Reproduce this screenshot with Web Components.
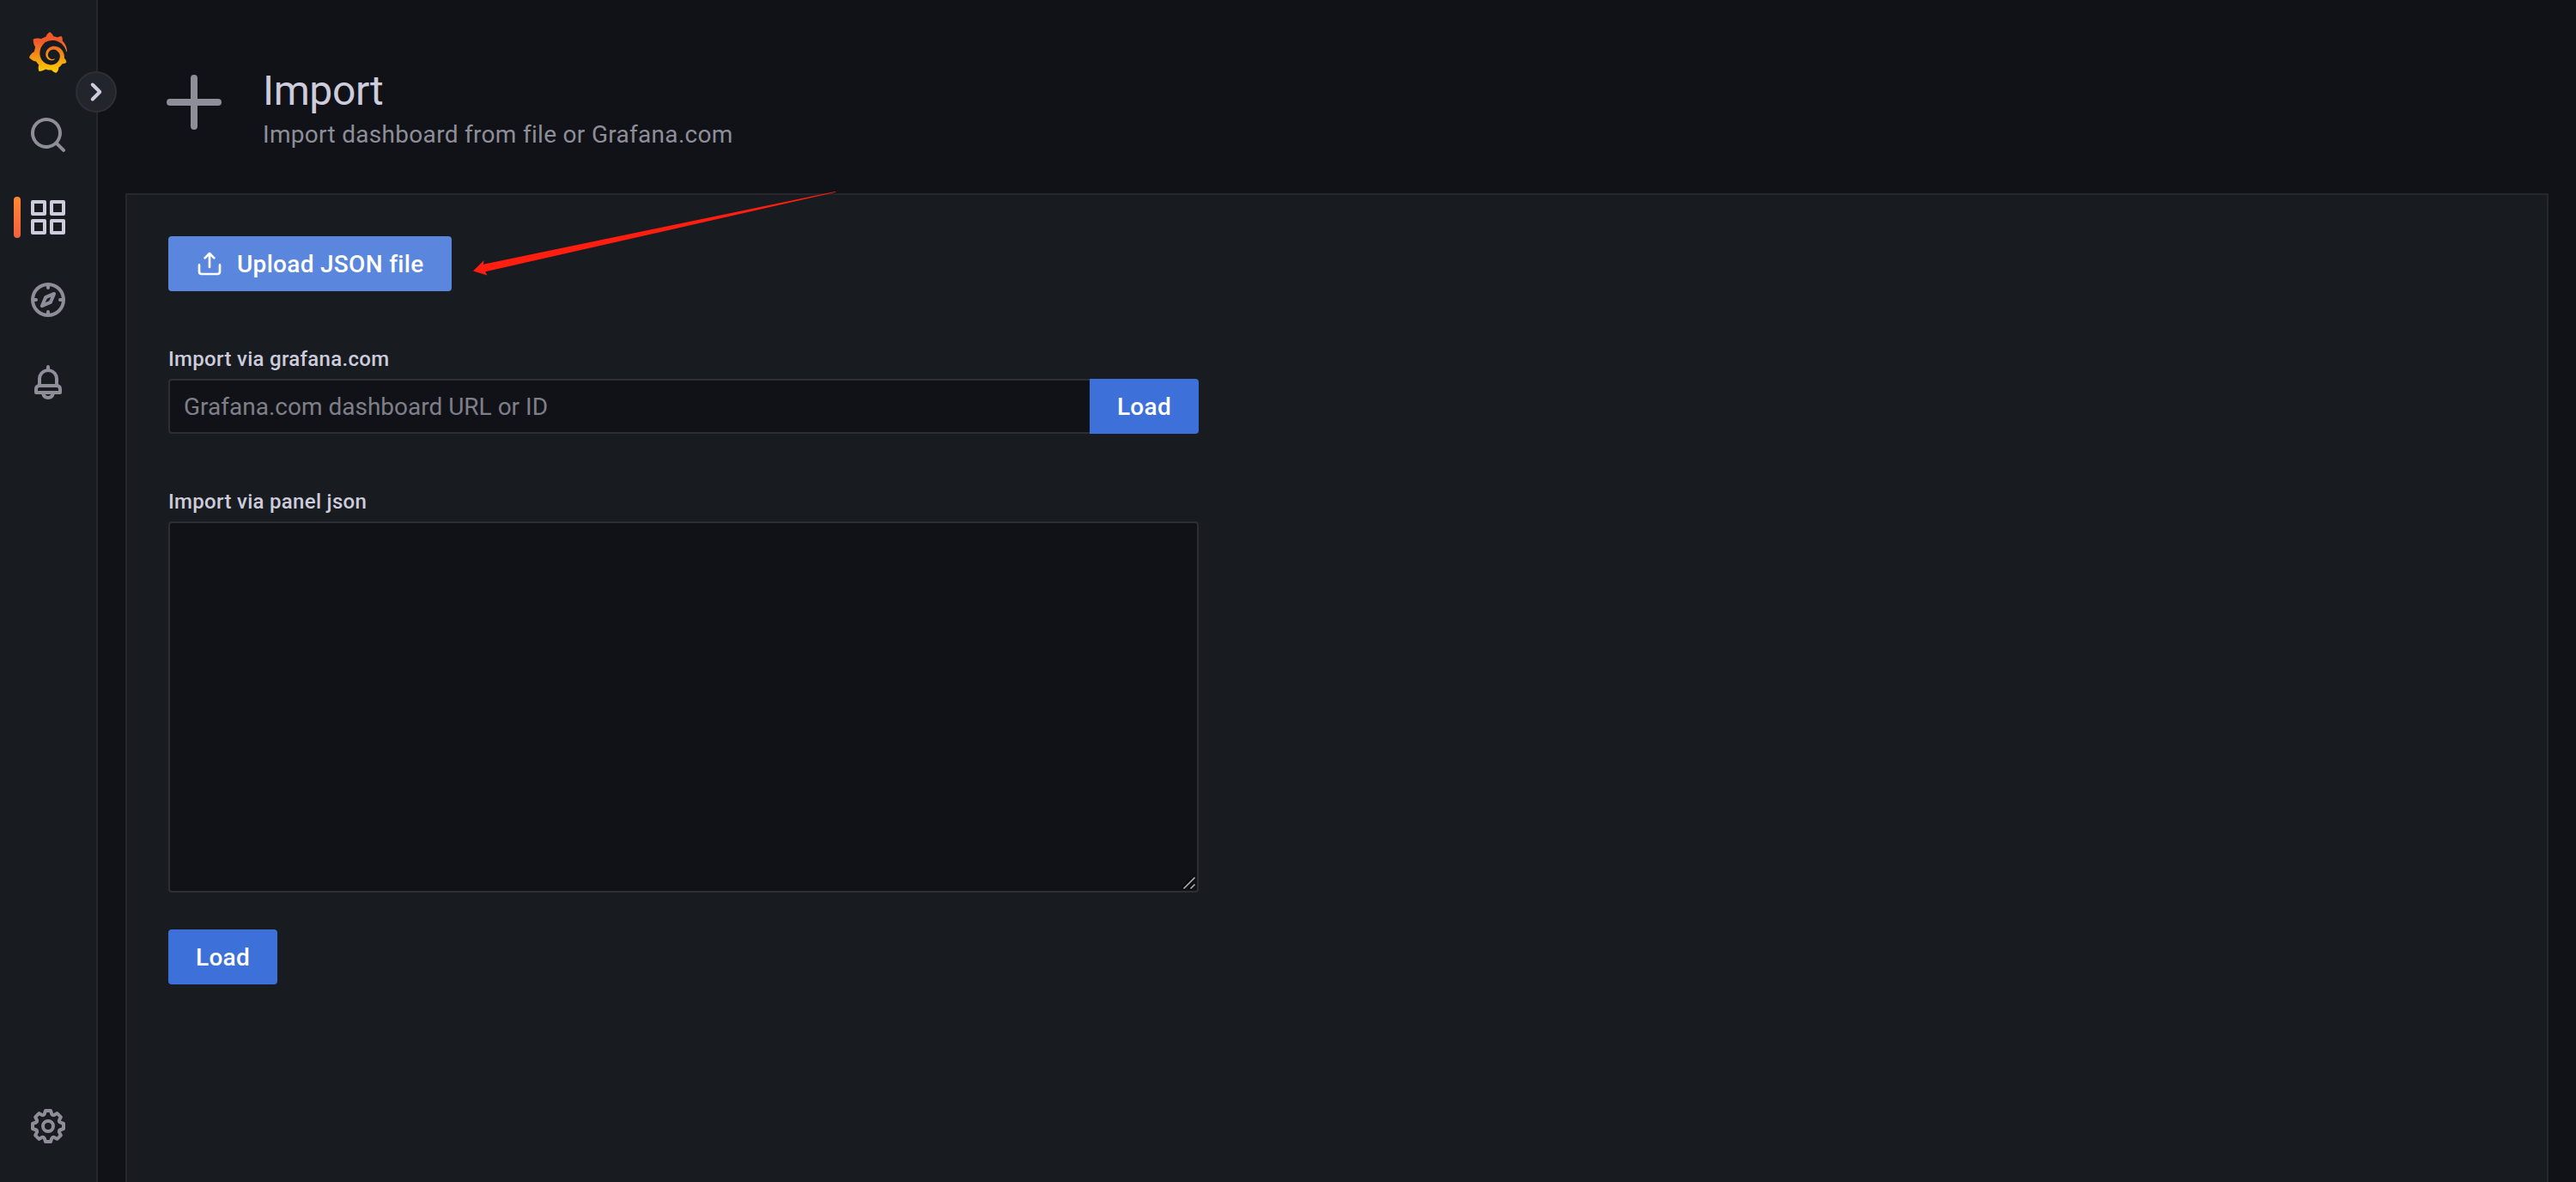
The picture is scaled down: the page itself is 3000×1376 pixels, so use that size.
<!DOCTYPE html>
<html lang="en">
<head>
<meta charset="utf-8">
<title>Import - Grafana</title>
<style>
:root {
    --canvas: #111217;
    --primary-bg: #181b1f;
    --secondary-bg: #22252b;
    --border-weak: #25272c;
    --border-medium: #2d2e34;
    --text: #ccccdc;
    --text-muted: #8e8e99;
    --primary: #3d71d9;
    --primary-hover: #5a86dd;
}
body {
    margin: 0;
    height: 1376px;
    overflow: hidden;
    background: var(--canvas);
    color: var(--text);
    font: 400 28px/44px Roboto, "Liberation Sans", sans-serif;
    letter-spacing: 0.3px;
}
</style>
</head>
<body>
<gf-app>
    <gf-sidebar slot="nav">
        <gf-nav-item><gf-logo></gf-logo></gf-nav-item>
        <gf-nav-item><gf-icon name="search"></gf-icon></gf-nav-item>
        <gf-nav-item active><gf-icon name="apps"></gf-icon></gf-nav-item>
        <gf-nav-item><gf-icon name="compass"></gf-icon></gf-nav-item>
        <gf-nav-item><gf-icon name="bell"></gf-icon></gf-nav-item>
        <gf-nav-item slot="bottom"><gf-icon name="cog"></gf-icon></gf-nav-item>
    </gf-sidebar>
    <gf-page-header>
        <gf-icon slot="icon" name="plus" size="64"></gf-icon>
        <span slot="title">Import</span>
        <span slot="subtitle">Import dashboard from file or Grafana.com</span>
    </gf-page-header>
    <gf-panel>
        <gf-button hover><gf-icon slot="icon" name="upload" size="32"></gf-icon>Upload JSON file</gf-button>
        <gf-field class="url">
            <span slot="label">Import via grafana.com</span>
            <gf-input>Grafana.com dashboard URL or ID</gf-input>
            <gf-button attached>Load</gf-button>
        </gf-field>
        <gf-field class="json">
            <span slot="label">Import via panel json</span>
            <gf-textarea></gf-textarea>
        </gf-field>
        <gf-button>Load</gf-button>
    </gf-panel>
    <gf-arrow slot="overlay"></gf-arrow>
</gf-app>

<script>
const define = (name, html, setup) => {
    const template = document.createElement('template');
    template.innerHTML = html;

    window.customElements.define(name, class extends HTMLElement {
        constructor() {
            super();
            const shadowRoot = this.attachShadow({ mode: "open" });
            shadowRoot.appendChild(template.content.cloneNode(true));
            if (setup) setup(this, shadowRoot);
        }
    });
};

const icons = {
    search: 'M21.71,20.29,18,16.61A9,9,0,1,0,16.61,18l3.68,3.68a1,1,0,0,0,1.42,0A1,1,0,0,0,21.71,20.29ZM11,18a7,7,0,1,1,7-7A7,7,0,0,1,11,18Z',
    apps: 'M10,13H3a1,1,0,0,0-1,1v7a1,1,0,0,0,1,1h7a1,1,0,0,0,1-1V14A1,1,0,0,0,10,13ZM9,20H4V15H9ZM21,2H14a1,1,0,0,0-1,1v7a1,1,0,0,0,1,1h7a1,1,0,0,0,1-1V3A1,1,0,0,0,21,2ZM20,9H15V4h5Zm1,4H14a1,1,0,0,0-1,1v7a1,1,0,0,0,1,1h7a1,1,0,0,0,1-1V14A1,1,0,0,0,21,13Zm-1,7H15V15h5ZM10,2H3A1,1,0,0,0,2,3v7a1,1,0,0,0,1,1h7a1,1,0,0,0,1-1V3A1,1,0,0,0,10,2ZM9,9H4V4H9Z',
    compass: 'M12,2A10,10,0,1,0,22,12,10,10,0,0,0,12,2Zm1,17.93V19a1,1,0,0,0-2,0v.93A8,8,0,0,1,4.07,13H5a1,1,0,0,0,0-2H4.07A8,8,0,0,1,11,4.07V5a1,1,0,0,0,2,0V4.07A8,8,0,0,1,19.93,11H19a1,1,0,0,0,0,2h.93A8,8,0,0,1,13,19.93ZM15.14,7.55l-5,2.12a1,1,0,0,0-.52.52l-2.12,5a1,1,0,0,0,.21,1.1,1,1,0,0,0,.7.29.93.93,0,0,0,.4-.08l5-2.12a1,1,0,0,0,.52-.52l2.12-5a1,1,0,0,0-1.31-1.31Zm-2.49,5.1-2.28,1,1-2.28,2.28-1Z',
    bell: 'M18,13.18V10a6,6,0,0,0-5-5.91V3a1,1,0,0,0-2,0V4.09A6,6,0,0,0,6,10v3.18A3,3,0,0,0,4,16v2a1,1,0,0,0,1,1H8.14a4,4,0,0,0,7.72,0H19a1,1,0,0,0,1-1V16A3,3,0,0,0,18,13.18ZM8,10a4,4,0,0,1,8,0v3H8Zm4,10a2,2,0,0,1-1.72-1h3.44A2,2,0,0,1,12,20Zm6-3H6V16a1,1,0,0,1,1-1H17a1,1,0,0,1,1,1Z',
    cog: 'M21.32,9.55l-1.89-.63.89-1.78A1,1,0,0,0,20.13,6L18,3.87a1,1,0,0,0-1.15-.19l-1.78.89-.63-1.89A1,1,0,0,0,13.5,2h-3a1,1,0,0,0-.95.68L8.92,4.57,7.14,3.68A1,1,0,0,0,6,3.87L3.87,6a1,1,0,0,0-.19,1.15l.89,1.78-1.89.63A1,1,0,0,0,2,10.5v3a1,1,0,0,0,.68.95l1.89.63-.89,1.78A1,1,0,0,0,3.87,18L6,20.13a1,1,0,0,0,1.15.19l1.78-.89.63,1.89a1,1,0,0,0,.95.68h3a1,1,0,0,0,.95-.68l.63-1.89,1.78.89A1,1,0,0,0,18,20.13L20.13,18a1,1,0,0,0,.19-1.15l-.89-1.78,1.89-.63A1,1,0,0,0,22,13.5v-3A1,1,0,0,0,21.32,9.55ZM20,12.78l-1.2.4A2,2,0,0,0,17.64,16l.57,1.14-1.1,1.1L16,17.64a2,2,0,0,0-2.79,1.16l-.4,1.2H11.22l-.4-1.2A2,2,0,0,0,8,17.64l-1.14.57-1.1-1.1L6.36,16A2,2,0,0,0,5.2,13.18L4,12.78V11.22l1.2-.4A2,2,0,0,0,6.36,8L5.79,6.89l1.1-1.1L8,6.36A2,2,0,0,0,10.82,5.2l.4-1.2h1.56l.4,1.2A2,2,0,0,0,16,6.36l1.14-.57,1.1,1.1L17.64,8a2,2,0,0,0,1.16,2.79l1.2.4ZM12,8a4,4,0,1,0,4,4A4,4,0,0,0,12,8Zm0,6a2,2,0,1,1,2-2A2,2,0,0,1,12,14Z',
    plus: 'M12,0a1.5,1.5,0,0,1,1.5,1.5v9h9a1.5,1.5,0,0,1,0,3h-9v9a1.5,1.5,0,0,1-3,0v-9h-9a1.5,1.5,0,0,1,0-3h9v-9A1.5,1.5,0,0,1,12,0Z',
    upload: 'M8.71,7.71,11,5.41V15a1,1,0,0,0,2,0V5.41l2.29,2.3a1,1,0,0,0,1.42,0,1,1,0,0,0,0-1.42l-4-4a1,1,0,0,0-.33-.21,1,1,0,0,0-.76,0,1,1,0,0,0-.33.21l-4,4A1,1,0,1,0,8.71,7.71ZM21,12a1,1,0,0,0-1,1v6a1,1,0,0,1-1,1H5a1,1,0,0,1-1-1V13a1,1,0,0,0-2,0v6a3,3,0,0,0,3,3H19a3,3,0,0,0,3-3V13A1,1,0,0,0,21,12Z',
    'angle-right': 'M14.83,11.29,10.59,7.05a1,1,0,0,0-1.42,0,1,1,0,0,0,0,1.41L12.71,12,9.17,15.54a1,1,0,0,0,0,1.41,1,1,0,0,0,.71.29,1,1,0,0,0,.71-.29l4.24-4.24A1,1,0,0,0,14.83,11.29Z'
};

define('gf-icon', `
<style>
:host { display: block; flex: none; }
svg { display: block; fill: currentColor; }
</style>
<svg viewBox="0 0 24 24" width="48" height="48"><path/></svg>`, (host, root) => {
    const svg = root.querySelector('svg');
    const size = host.getAttribute('size') || 48;
    svg.setAttribute('width', size);
    svg.setAttribute('height', size);
    root.querySelector('path').setAttribute('d', icons[host.getAttribute('name')]);
});

define('gf-logo', `
<style>
:host { display: block; }
svg { display: block; }
</style>
<svg viewBox="0 0 351 365" width="48" height="48">
    <defs>
        <linearGradient id="flame" gradientUnits="userSpaceOnUse" x1="175" y1="358" x2="175" y2="90">
            <stop offset="0" stop-color="#fcd000"/>
            <stop offset="1" stop-color="#f05a28"/>
        </linearGradient>
    </defs>
    <path fill="url(#flame)" d="M342,161.2c-0.6-6.1-1.6-13.1-3.6-20.9c-2-7.7-5-16.2-9.4-25c-4.4-8.8-10.1-17.9-17.5-26.8c-2.9-3.5-6.1-6.9-9.5-10.2c5.1-20.3-6.2-37.9-6.2-37.9c-19.5-1.2-31.9,6.1-36.5,9.4c-0.8-0.3-1.5-0.7-2.3-1c-3.3-1.3-6.7-2.6-10.3-3.7c-3.5-1.1-7.1-2.1-10.8-3c-3.7-0.9-7.4-1.6-11.2-2.2c-0.7-0.1-1.3-0.2-2-0.3c-8.5-27.2-32.9-38.6-32.9-38.6c-27.3,17.3-32.4,41.5-32.4,41.5s-0.1,0.5-0.3,1.4c-1.5,0.4-3,0.9-4.5,1.3c-2.1,0.6-4.2,1.4-6.2,2.2c-2.1,0.8-4.1,1.6-6.2,2.5c-4.1,1.8-8.2,3.8-12.2,6c-3.9,2.2-7.7,4.6-11.4,7.1c-0.5-0.2-1-0.4-1-0.4c-37.8-14.4-71.3,2.9-71.3,2.9c-3.1,40.2,15.1,65.5,18.7,70.1c-0.9,2.5-1.7,5-2.5,7.5c-2.8,9.1-4.9,18.4-6.2,28.1c-0.2,1.4-0.4,2.8-0.5,4.2C18.8,192.7,8.5,228,8.5,228c29.1,33.5,63.1,35.6,63.1,35.6c0,0,0.1-0.1,0.1-0.1c4.3,7.7,9.3,15,14.9,21.9c2.4,2.9,4.8,5.6,7.4,8.3c-10.6,30.4,1.5,55.6,1.5,55.6c32.4,1.2,53.7-14.2,58.2-17.7c3.2,1.1,6.5,2.1,9.8,2.9c10,2.6,20.2,4.1,30.4,4.5c2.5,0.1,5.1,0.2,7.6,0.1l1.2,0l0.8,0l1.6,0l1.6-0.1l0,0.1c15.3,21.8,42.1,24.9,42.1,24.9c19.1-20.1,20.2-40.1,20.2-44.4l0,0c0,0,0-0.1,0-0.3c0-0.4,0-0.6,0-0.6l0,0c0-0.3,0-0.6,0-0.9c4-2.8,7.8-5.8,11.4-9.1c7.6-6.9,14.3-14.8,19.9-23.3c0.5-0.8,1-1.6,1.5-2.4c21.6,1.2,36.9-13.4,36.9-13.4c-3.6-22.5-16.4-33.5-19.1-35.6l0,0c0,0-0.1-0.1-0.3-0.2c-0.2-0.1-0.2-0.2-0.2-0.2c0,0,0,0,0,0c-0.1-0.1-0.3-0.2-0.5-0.3c0.1-1.4,0.2-2.7,0.3-4.1c0.2-2.4,0.2-4.9,0.2-7.3l0-1.8l0-0.9l0-0.5c0-0.6,0-0.4,0-0.6l-0.1-1.5l-0.1-2c0-0.7-0.1-1.3-0.2-1.9c-0.1-0.6-0.1-1.3-0.2-1.9l-0.2-1.9l-0.3-1.9c-0.4-2.5-0.8-4.9-1.4-7.4c-2.3-9.7-6.1-18.9-11-27.2c-5-8.3-11.2-15.6-18.3-21.8c-7-6.2-14.9-11.2-23.1-14.9c-8.3-3.7-16.9-6.1-25.5-7.2c-4.3-0.6-8.6-0.8-12.9-0.7l-1.6,0l-0.4,0c-0.1,0-0.6,0-0.5,0l-0.7,0l-1.6,0.1c-0.6,0-1.2,0.1-1.7,0.1c-2.2,0.2-4.4,0.5-6.5,0.9c-8.6,1.6-16.7,4.7-23.8,9c-7.1,4.3-13.3,9.6-18.3,15.6c-5,6-8.9,12.7-11.6,19.6c-2.7,6.9-4.2,14.1-4.6,21c-0.1,1.7-0.1,3.5-0.1,5.2c0,0.4,0,0.9,0,1.3l0.1,1.4c0.1,0.8,0.1,1.7,0.2,2.5c0.3,3.5,1,6.9,1.9,10.1c1.9,6.5,4.9,12.4,8.6,17.4c3.7,5,8.2,9.1,12.9,12.4c4.7,3.2,9.8,5.5,14.8,7c5,1.5,10,2.1,14.7,2.1c0.6,0,1.2,0,1.7,0c0.3,0,0.6,0,0.9,0c0.3,0,0.6,0,0.9-0.1c0.5,0,1-0.1,1.5-0.1c0.1,0,0.3,0,0.4-0.1l0.5-0.1c0.3,0,0.6-0.1,0.9-0.1c0.6-0.1,1.1-0.2,1.7-0.3c0.6-0.1,1.1-0.2,1.6-0.4c1.1-0.2,2.1-0.6,3.1-0.9c2-0.7,4-1.5,5.7-2.4c1.8-0.9,3.4-2,5-3c0.4-0.3,0.9-0.6,1.3-1c1.6-1.3,1.9-3.7,0.6-5.3c-1.1-1.4-3.1-1.8-4.7-0.9c-0.4,0.2-0.8,0.4-1.2,0.6c-1.4,0.7-2.8,1.3-4.3,1.8c-1.5,0.5-3.1,0.9-4.7,1.2c-0.8,0.1-1.6,0.2-2.5,0.3c-0.4,0-0.8,0.1-1.3,0.1c-0.4,0-0.9,0-1.2,0c-0.4,0-0.8,0-1.2,0c-0.5,0-1,0-1.5-0.1c0,0-0.3,0-0.1,0l-0.2,0l-0.3,0c-0.2,0-0.5,0-0.7-0.1c-0.5-0.1-0.9-0.1-1.4-0.2c-3.7-0.5-7.4-1.6-10.9-3.2c-3.6-1.6-7-3.8-10.1-6.6c-3.1-2.8-5.8-6.1-7.9-9.9c-2.1-3.8-3.6-8-4.3-12.4c-0.3-2.2-0.5-4.5-0.4-6.7c0-0.6,0.1-1.2,0.1-1.8c0,0.2,0-0.1,0-0.1l0-0.2l0-0.5c0-0.3,0.1-0.6,0.1-0.9c0.1-1.2,0.3-2.4,0.5-3.6c1.7-9.6,6.5-19,13.9-26.1c1.9-1.8,3.9-3.4,6-4.9c2.1-1.5,4.4-2.8,6.8-3.9c2.4-1.1,4.8-2,7.4-2.7c2.5-0.7,5.1-1.1,7.8-1.4c1.3-0.1,2.6-0.2,4-0.2c0.4,0,0.6,0,0.9,0l1.1,0l0.7,0c0.3,0,0,0,0.1,0l0.3,0l1.1,0.1c2.9,0.2,5.7,0.6,8.5,1.3c5.6,1.2,11.1,3.3,16.2,6.1c10.2,5.7,18.9,14.5,24.2,25.1c2.7,5.3,4.6,11,5.5,16.9c0.2,1.5,0.4,3,0.5,4.5l0.1,1.1l0.1,1.1c0,0.4,0,0.8,0,1.1c0,0.4,0,0.8,0,1.1l0,1l0,1.1c0,0.7-0.1,1.9-0.1,2.6c-0.1,1.6-0.3,3.3-0.5,4.9c-0.2,1.6-0.5,3.2-0.8,4.8c-0.3,1.6-0.7,3.2-1.1,4.7c-0.8,3.1-1.8,6.2-3,9.3c-2.4,6-5.6,11.8-9.4,17.1c-7.7,10.6-18.2,19.2-30.2,24.7c-6,2.7-12.3,4.7-18.8,5.7c-3.2,0.6-6.5,0.9-9.8,1l-0.6,0l-0.5,0l-1.1,0l-1.6,0l-0.8,0c0.4,0-0.1,0-0.1,0l-0.3,0c-1.8,0-3.5-0.1-5.3-0.3c-7-0.5-13.9-1.8-20.7-3.7c-6.7-1.9-13.2-4.6-19.4-7.8c-12.3-6.6-23.4-15.6-32-26.5c-4.3-5.4-8.1-11.3-11.2-17.4c-3.1-6.1-5.6-12.6-7.4-19.1c-1.8-6.6-2.9-13.3-3.4-20.1l-0.1-1.3l0-0.3l0-0.3l0-0.6l0-1.1l0-0.3l0-0.4l0-0.8l0-1.6l0-0.3c0,0,0,0.1,0-0.1l0-0.6c0-0.8,0-1.7,0-2.5c0.1-3.3,0.4-6.8,0.8-10.2c0.4-3.4,1-6.9,1.7-10.3c0.7-3.4,1.5-6.8,2.5-10.2c1.9-6.7,4.3-13.2,7.1-19.3c5.7-12.2,13.1-23.1,22-31.8c2.2-2.2,4.5-4.2,6.9-6.2c2.4-1.9,4.9-3.7,7.5-5.4c2.5-1.7,5.2-3.2,7.9-4.6c1.3-0.7,2.7-1.4,4.1-2c0.7-0.3,1.4-0.6,2.1-0.9c0.7-0.3,1.4-0.6,2.1-0.9c2.8-1.2,5.7-2.2,8.7-3.1c0.7-0.2,1.5-0.4,2.2-0.7c0.7-0.2,1.5-0.4,2.2-0.6c1.5-0.4,3-0.8,4.5-1.1c0.7-0.2,1.5-0.3,2.3-0.5c0.8-0.2,1.5-0.3,2.3-0.5c0.8-0.1,1.5-0.3,2.3-0.4l1.1-0.2l1.2-0.2c0.8-0.1,1.5-0.2,2.3-0.3c0.9-0.1,1.7-0.2,2.6-0.3c0.7-0.1,1.9-0.2,2.6-0.3c0.5-0.1,1.1-0.1,1.6-0.2l1.1-0.1l0.5-0.1l0.6,0c0.9-0.1,1.7-0.1,2.6-0.2l1.3-0.1c0,0,0.5,0,0.1,0l0.3,0l0.6,0c0.7,0,1.5-0.1,2.2-0.1c2.9-0.1,5.9-0.1,8.8,0c5.8,0.2,11.5,0.9,17,1.9c11.1,2.1,21.5,5.6,31,10.3c9.5,4.6,17.9,10.3,25.3,16.5c0.5,0.4,0.9,0.8,1.4,1.2c0.4,0.4,0.9,0.8,1.3,1.2c0.9,0.8,1.7,1.6,2.6,2.4c0.9,0.8,1.7,1.6,2.5,2.4c0.8,0.8,1.6,1.6,2.4,2.5c3.1,3.3,6,6.6,8.6,10c5.2,6.7,9.4,13.5,12.7,19.9c0.2,0.4,0.4,0.8,0.6,1.2c0.2,0.4,0.4,0.8,0.6,1.2c0.4,0.8,0.8,1.6,1.1,2.4c0.4,0.8,0.7,1.5,1.1,2.3c0.3,0.8,0.7,1.5,1,2.3c1.2,3,2.4,5.9,3.3,8.6c1.5,4.4,2.6,8.3,3.5,11.7c0.3,1.4,1.6,2.3,3,2.1c1.5-0.1,2.6-1.3,2.6-2.8C342.6,170.4,342.5,166.1,342,161.2z"/>
</svg>`);

define('gf-app', `
<style>
:host {
    display: flex;
    position: relative;
    height: 100%;
}
main {
    flex: 1;
    display: flex;
    flex-direction: column;
    padding: 0 32px;
}
</style>
<slot name="nav"></slot>
<main><slot></slot></main>
<slot name="overlay"></slot>`);

define('gf-sidebar', `
<style>
:host {
    position: relative;
    box-sizing: border-box;
    flex: none;
    display: flex;
    flex-direction: column;
    justify-content: space-between;
    width: 114px;
    padding: 13px 0 17px;
    background: var(--primary-bg);
    border-right: 2px solid var(--border-weak);
}
/* expand handle, sits across the sidebar edge */
.toggle {
    position: absolute;
    top: 83px;
    right: -24px;
    box-sizing: border-box;
    width: 48px;
    height: 48px;
    display: flex;
    align-items: center;
    justify-content: center;
    border: 2px solid #2d2f35;
    border-radius: 50%;
    background: var(--secondary-bg);
}
</style>
<div><slot></slot></div>
<div><slot name="bottom"></slot></div>
<div class="toggle"><gf-icon name="angle-right"></gf-icon></div>`);

define('gf-nav-item', `
<style>
:host {
    position: relative;
    display: flex;
    align-items: center;
    justify-content: center;
    height: 96px;
    color: var(--text-muted);
}
:host([active]) { color: var(--text); }
:host([active])::before {
    content: "";
    position: absolute;
    left: 16px;
    top: 24px;
    width: 8px;
    height: 48px;
    border-radius: 4px;
    background: linear-gradient(#ff8833, #f55f3e);
}
</style>
<slot></slot>`);

define('gf-page-header', `
<style>
:host {
    box-sizing: border-box;
    flex: none;
    display: flex;
    align-items: flex-start;
    gap: 48px;
    height: 225px;
    padding: 78px 48px 0;
}
.icon { padding-top: 9px; color: var(--text-muted); }
h1 {
    margin: 0 0 1px;
    font-size: 48px;
    font-weight: 400;
    line-height: 56px;
    letter-spacing: -0.4px;
}
.sub { color: var(--text-muted); }
</style>
<div class="icon"><slot name="icon"></slot></div>
<div>
    <h1><slot name="title"></slot></h1>
    <div class="sub"><slot name="subtitle"></slot></div>
</div>`);

define('gf-panel', `
<style>
:host {
    flex: 1;
    display: flex;
    flex-direction: column;
    align-items: flex-start;
    padding: 48px;
    background: var(--primary-bg);
    border: 2px solid var(--border-weak);
    border-bottom: 0;
}
::slotted(.url) { margin-top: 64px; }
::slotted(.json) { margin: 64px 0 43px; }
</style>
<slot></slot>`);

define('gf-field', `
<style>
:host { display: block; width: 1200px; }
.label {
    height: 38px;
    font-size: 24px;
    font-weight: 500;
    line-height: 30px;
}
.row { display: flex; }
</style>
<div class="label"><slot name="label"></slot></div>
<div class="row"><slot></slot></div>`);

define('gf-input', `
<style>
:host {
    box-sizing: border-box;
    flex: 1;
    height: 64px;
    padding: 0 16px;
    line-height: 62px;
    letter-spacing: 0;
    color: #7f7f8a;
    background: var(--canvas);
    border: 2px solid var(--border-medium);
    border-right: 0;
    border-radius: 4px 0 0 4px;
}
</style>
<slot></slot>`);

define('gf-textarea', `
<style>
:host {
    box-sizing: border-box;
    flex: 1;
    display: flex;
    align-items: flex-end;
    justify-content: flex-end;
    height: 432px;
    background: var(--canvas);
    border: 2px solid var(--border-medium);
    border-radius: 4px;
}
svg { display: block; }
</style>
<svg width="18" height="18" viewBox="0 0 18 18" fill="none">
    <path d="M1.5 15.5L14.5 2.5M9.5 15.5L14.5 10.5" stroke="#000" stroke-width="4" opacity=".6"/>
    <path d="M2.5 15.5L15.5 2.5M10.5 15.5L15.5 10.5" stroke="#b0b0b2" stroke-width="1.7"/>
</svg>`);

define('gf-button', `
<style>
:host {
    box-sizing: border-box;
    flex: none;
    display: flex;
    align-items: center;
    height: 64px;
    padding: 0 32px;
    color: #fff;
    font-weight: 500;
    line-height: 64px;
    background: var(--primary);
    border-radius: 4px;
}
:host([hover]) { background: var(--primary-hover); }
:host([attached]) { border-radius: 0 4px 4px 0; }
::slotted(gf-icon) { margin-right: 16px; }
.text { padding-top: 2px; }
</style>
<slot name="icon"></slot><span class="text"><slot></slot></span>`);

define('gf-arrow', `
<style>
:host {
    position: absolute;
    left: 550px;
    top: 222px;
}
svg { display: block; }
</style>
<svg width="426" height="100" viewBox="550 222 426 100">
    <path fill="#ff1e10" d="M551 315.6L563.6 303L562.8 307.7L972.5 222.9L974 223.6L565.2 316.3L567.3 320.4Z"/>
</svg>`);
</script>
</body>
</html>
